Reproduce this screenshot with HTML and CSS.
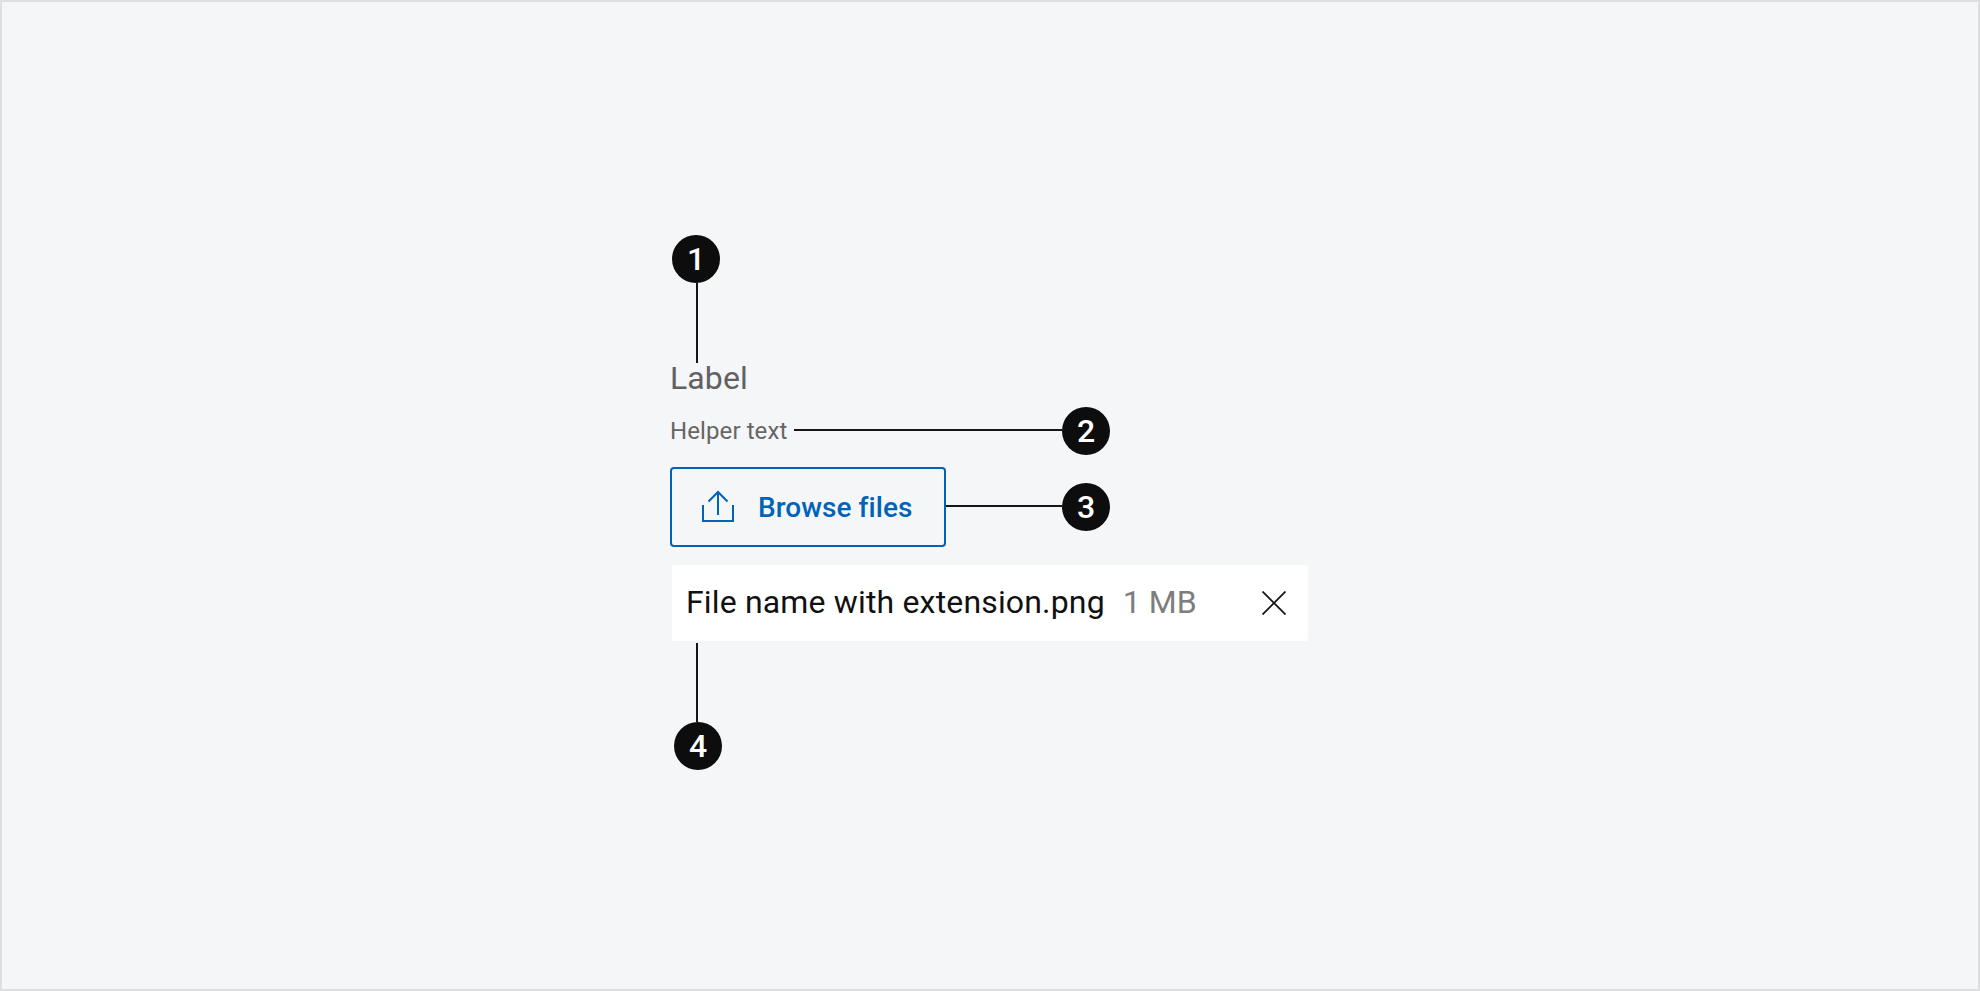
FILE: index.html
```html
<!DOCTYPE html>
<html lang="en">
<head>
<meta charset="utf-8">
<title>File uploader anatomy</title>
<link rel="stylesheet" href="styles.css">
</head>
<body>
<main class="canvas">
  <section class="uploader">
    <div class="label">Label</div>
    <div class="helper">Helper text</div>
    <button class="browse" type="button">
      <svg class="upload-icon" width="32" height="32" viewBox="0 0 32 32" fill="none" stroke="currentColor" stroke-width="2">
        <path d="M1 15V31H31V15"/>
        <path d="M16 25V2M6.5 11.5L16 2L25.5 11.5"/>
      </svg>
      <span>Browse files</span>
    </button>
    <div class="file">
      <span class="file-name">File name with extension.png</span>
      <span class="file-size">1 MB</span>
      <svg class="close-icon" width="24" height="24" viewBox="0 0 24 24" fill="none" stroke="currentColor" stroke-width="1.8">
        <path d="M0.5 0.5L23.5 23.5M23.5 0.5L0.5 23.5"/>
      </svg>
    </div>
  </section>

  <div class="line line-1"></div>
  <div class="line line-2"></div>
  <div class="line line-3"></div>
  <div class="line line-4"></div>
  <div class="pin pin-1">1</div>
  <div class="pin pin-2">2</div>
  <div class="pin pin-3">3</div>
  <div class="pin pin-4">4</div>
</main>
</body>
</html>
```
FILE: styles.css
```css
* { box-sizing: border-box; }
html, body { margin: 0; height: 100%; }
body { font-family: Roboto, "Liberation Sans", sans-serif; background: #f5f6f8; }

.canvas {
  position: relative;
  width: 1980px;
  height: 991px;
  background: #f5f6f8;
  border: 2px solid #dfdfdf;
  padding: 355px 0 0 668px;
}

.uploader { display: flex; flex-direction: column; align-items: flex-start; }

.label { font-size: 32px; line-height: 42px; color: #616161; letter-spacing: 0.1px; }
.helper { margin-top: 17px; font-size: 24px; line-height: 30px; letter-spacing: 0.1px; color: #666; }

.browse {
  display: flex;
  align-items: center;
  gap: 24px;
  width: 276px;
  height: 80px;
  margin-top: 21px;
  padding: 0 0 0 30px;
  background: transparent;
  border: 2px solid #0063b8;
  border-radius: 4px;
  color: #0063b8;
  font: 500 28px Roboto, sans-serif;
  letter-spacing: 0.05px;
}
.upload-icon { flex: none; margin-top: -2px; }

.file {
  display: flex;
  align-items: center;
  width: 636px;
  height: 76px;
  margin: 18px 0 0 2px;
  padding: 0 22px 0 14px;
  background: #fff;
  border-radius: 2px;
}
.file-name { font-size: 32px; line-height: 72px; margin-bottom: 2px; letter-spacing: 0.16px; color: #111; }
.file-size { margin: 0 0 2px 18px; font-size: 32px; line-height: 72px; color: #7d7d7d; }
.close-icon { margin-left: auto; color: #161616; }

.line { position: absolute; background: #161616; }
.line-1 { left: 694px; top: 281px; width: 2px; height: 80px; }
.line-2 { left: 792px; top: 427px; width: 268px; height: 2px; }
.line-3 { left: 944px; top: 503px; width: 116px; height: 2px; }
.line-4 { left: 694px; top: 641px; width: 2px; height: 79px; }

.pin {
  position: absolute;
  display: flex;
  align-items: center;
  justify-content: center;
  width: 48px;
  height: 48px;
  border-radius: 50%;
  background: #0d0d0d;
  color: #fff;
  font-size: 32px;
  font-weight: 500;
  line-height: 46px;
  padding-bottom: 1px;
}
.pin-1 { left: 670px; top: 233px; }
.pin-2 { left: 1060px; top: 405px; }
.pin-3 { left: 1060px; top: 481px; }
.pin-4 { left: 672px; top: 720px; }
```
